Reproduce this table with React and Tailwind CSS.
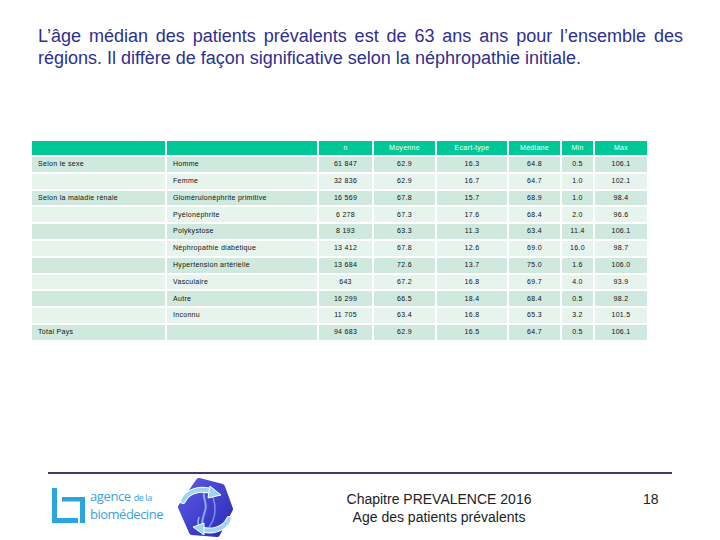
import React from 'react'

const COLS = ['', '', 'n', 'Moyenne', 'Ecart-type', 'Médiane', 'Min', 'Max']

const ROWS = [
  ['Selon le sexe', 'Homme', '61 847', '62.9', '16.3', '64.8', '0.5', '106.1'],
  ['', 'Femme', '32 836', '62.9', '16.7', '64.7', '1.0', '102.1'],
  ['Selon la maladie rénale', 'Glomérulonéphrite primitive', '16 569', '67.8', '15.7', '68.9', '1.0', '98.4'],
  ['', 'Pyélonéphrite', '6 278', '67.3', '17.6', '68.4', '2.0', '96.6'],
  ['', 'Polykystose', '8 193', '63.3', '11.3', '63.4', '11.4', '106.1'],
  ['', 'Néphropathie diabétique', '13 412', '67.8', '12.6', '69.0', '16.0', '98.7'],
  ['', 'Hypertension artérielle', '13 684', '72.6', '13.7', '75.0', '1.6', '106.0'],
  ['', 'Vasculaire', '643', '67.2', '16.8', '69.7', '4.0', '93.9'],
  ['', 'Autre', '16 299', '66.5', '18.4', '68.4', '0.5', '98.2'],
  ['', 'Inconnu', '11 705', '63.4', '16.8', '65.3', '3.2', '101.5'],
  ['Total Pays', '', '94 683', '62.9', '16.5', '64.7', '0.5', '106.1'],
]

function AgenceLogo() {
  return (
    <div className="flex items-start">
      <svg width="34" height="36" viewBox="0 0 34 36" className="mt-[14px]">
        <rect x="0" y="0" width="5" height="35" fill="#2aa6df" />
        <rect x="0" y="30" width="26" height="5" fill="#2aa6df" />
        <rect x="10" y="9" width="23" height="4.5" fill="#2aa6df" />
        <rect x="28" y="9" width="5" height="26" fill="#2aa6df" />
      </svg>
      <div className="ml-[4px] mt-[14px] text-[#3aa2dc] font-['Open_Sans',sans-serif] leading-[16px]">
        <div className="text-[13px] tracking-[-0.4px]">
          agence <span className="text-[9px]">de la</span>
        </div>
        <div className="text-[13px] tracking-[-0.5px]">biomédecine</div>
      </div>
    </div>
  )
}

function KidneyIcon() {
  return (
    <svg width="56" height="62" viewBox="0 0 56 62">
      <defs>
        <linearGradient id="hex" x1="0" y1="0" x2="1" y2="1">
          <stop offset="0" stopColor="#5a5ae6" />
          <stop offset="1" stopColor="#2b2bb8" />
        </linearGradient>
      </defs>
      <polygon
        points="22,4 45,10 53,32 40,57 15,55 4,30"
        fill="url(#hex)"
        stroke="url(#hex)"
        strokeWidth="6"
        strokeLinejoin="round"
      />
      <path d="M27 12 C25 22 31 26 28 34 C26 40 24 46 26 54" stroke="#8fa6f2" strokeWidth="2" fill="none" />
      <path d="M32 14 C40 24 40 40 32 50" stroke="#7b8ff0" strokeWidth="1.5" fill="none" />
      <path d="M22 40 C20 46 22 52 24 55" stroke="#9fb3f6" strokeWidth="1.5" fill="none" />
      <path d="M6 24 C10 14 24 10 36 15" stroke="#ffffff" strokeWidth="6" fill="none" strokeLinecap="round" />
      <path d="M6 24 C10 14 24 10 36 15" stroke="#9fd3f4" strokeWidth="4" fill="none" strokeLinecap="round" />
      <polygon points="33,9 44,18 31,21" fill="#9fd3f4" stroke="#ffffff" strokeWidth="1" />
      <path d="M52 42 C48 52 34 56 24 52" stroke="#ffffff" strokeWidth="6" fill="none" strokeLinecap="round" />
      <path d="M52 42 C48 52 34 56 24 52" stroke="#9fd3f4" strokeWidth="4" fill="none" strokeLinecap="round" />
      <polygon points="27,46 16,50 27,58" fill="#9fd3f4" stroke="#ffffff" strokeWidth="1" />
    </svg>
  )
}

export default function App() {
  return (
    <div className="w-[720px] h-[540px] bg-white flex flex-col overflow-hidden font-['Liberation_Sans',Arial,sans-serif]">
      {/* Title */}
      <div className="pl-[38px] pt-[25px] w-[683px] text-[18px] leading-[22px] text-[#2d2f91]">
        <div className="text-justify [text-align-last:justify]">
          L’âge médian des patients prévalents est de 63 ans ans pour l’ensemble des
        </div>
        <div>régions. Il diffère de façon significative selon la néphropathie initiale.</div>
      </div>

      {/* Table */}
      <div className="ml-[32px] mt-[72px] grid grid-cols-[133px_150px_53px_61px_70px_51px_31px_52px] gap-[2px] text-[7px] tracking-[0.3px]">
        {COLS.map((c, i) => (
          <div key={'h' + i} className="h-[14px] bg-[#00c796] text-white flex items-center justify-center">
            {c}
          </div>
        ))}
        {ROWS.map((row, r) =>
          row.map((cell, i) => (
            <div
              key={r + '-' + i}
              className={
                'h-[14.8px] flex items-center text-[#111] ' +
                (r % 2 === 0 ? 'bg-[#cfe9de] ' : 'bg-[#e7f4ee] ') +
                (i < 2 ? 'justify-start pl-[6px]' : 'justify-center')
              }
            >
              {cell}
            </div>
          ))
        )}
      </div>

      <div className="flex-1" />

      {/* Footer rule */}
      <div className="mx-[48px] h-[2px] bg-[#3d3b6e]" />

      {/* Footer */}
      <div className="h-[66px] flex items-start pl-[52px]">
        <div className="w-[125px]">
          <AgenceLogo />
        </div>
        <div className="mt-[3px]">
          <KidneyIcon />
        </div>
        <div className="ml-[86px] w-[240px] mt-[16px] text-center text-[14px] leading-[18px] text-[#222]">
          <div>Chapitre PREVALENCE 2016</div>
          <div>Age des patients prévalents</div>
        </div>
        <div className="ml-[84px] mt-[16px] text-[14px] leading-[18px] text-[#222]">18</div>
      </div>
    </div>
  )
}
